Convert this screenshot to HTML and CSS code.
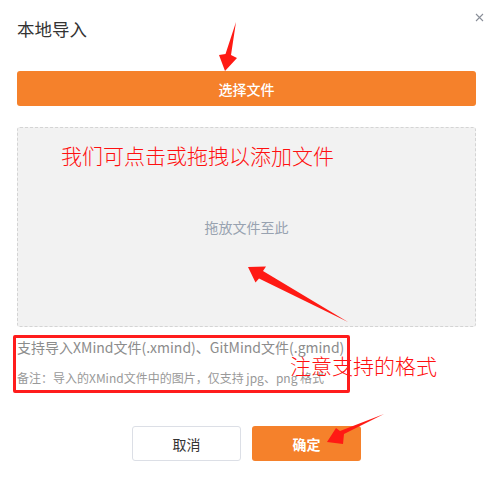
FILE: index.html
```html
<!DOCTYPE html>
<html lang="zh-CN">
<head>
<meta charset="utf-8">
<title>本地导入</title>
<link rel="stylesheet" href="styles.css">
</head>
<body>
<div class="dialog">
  <header class="head">
    <h1 class="title">本地导入</h1>
    <button class="close" aria-label="关闭">
      <svg width="9" height="9" viewBox="0 0 9 9"><path d="M1 1L8 8M8 1L1 8" stroke="#8a8f99" stroke-width="1.1" fill="none"/></svg>
    </button>
  </header>
  <button class="pick">选择文件</button>
  <div class="drop">拖放文件至此</div>
  <p class="support">支持导入XMind文件(.xmind)、GitMind文件(.gmind)</p>
  <p class="note">备注：导入的XMind文件中的图片，仅支持 jpg、png 格式</p>
  <footer class="actions">
    <button class="btn btn-cancel">取消</button>
    <button class="btn btn-ok">确定</button>
  </footer>
</div>

<!-- hand-drawn annotation layer -->
<div class="marks">
  <svg class="arrows" width="493" height="481" viewBox="0 0 493 481">
    <polygon points="236,22 231,55 237,58 225,71 219,55 225.5,54" />
    <polygon points="248,267 266,266.5 263,271 348,322 259,278.5 255.5,282.5" />
    <polygon points="384,414 344,434 343,444 327,442 336,428 340,431" />
  </svg>
  <span class="mark-text mark-drag">我们可点击或拖拽以添加文件</span>
  <span class="mark-text mark-format">注意支持的格式</span>
  <div class="mark-box"></div>
</div>
</body>
</html>
```

FILE: styles.css
```css
* { box-sizing: border-box; }

html, body {
  margin: 0;
  background: #fff;
  font-family: "Noto Sans CJK SC", "Noto Sans", sans-serif;
}

.dialog {
  width: 493px;
  height: 481px;
  padding: 16px 17px 0;
  position: relative;
}

.head {
  display: flex;
  justify-content: space-between;
  align-items: flex-start;
  height: 26px;
}

.title {
  margin: 0;
  font-size: 17.5px;
  line-height: 26px;
  font-weight: 400;
  color: #333;
}

.close {
  border: 0;
  background: none;
  padding: 0;
  margin: -3px -8px 0 0;
  width: 9px;
  height: 9px;
  display: flex;
}

.pick {
  display: block;
  width: 100%;
  height: 35px;
  margin-top: 29px;
  border: 0;
  border-radius: 3px;
  background: #f5812b;
  color: #fff;
  font-family: inherit;
  font-size: 14px;
  font-weight: 500;
}

.drop {
  margin-top: 21px;
  height: 200px;
  border: 1px dashed #d4d4d4;
  border-radius: 3px;
  background: #f2f2f2;
  display: flex;
  align-items: center;
  justify-content: center;
  color: #98a2b0;
  font-size: 14px;
}

.support {
  margin: 10px 0 0;
  font-size: 14px;
  line-height: 20px;
  color: #8c8c8c;
}

.note {
  margin: 12px 0 0;
  font-size: 12px;
  line-height: 18px;
  color: #999;
}

.actions {
  margin-top: 39px;
  display: flex;
  justify-content: center;
  gap: 11px;
}

.btn {
  width: 109px;
  height: 35px;
  border-radius: 3px;
  font-family: inherit;
  font-size: 14px;
}

.btn-cancel {
  background: #fff;
  border: 1px solid #dcdfe6;
  color: #333;
}

.btn-ok {
  background: #f5812b;
  border: 0;
  color: #fff;
  font-weight: 700;
}

/* annotation layer drawn over the dialog */
.marks {
  position: absolute;
  inset: 0;
  pointer-events: none;
}

.arrows {
  position: absolute;
  left: 0;
  top: 0;
}

.arrows polygon {
  fill: #ff1a14;
}

.mark-text {
  position: absolute;
  color: #ff1010;
  font-size: 21px;
  line-height: 24px;
  font-weight: 300;
  white-space: nowrap;
}

.mark-drag {
  left: 61px;
  top: 143px;
}

.mark-format {
  left: 290px;
  top: 353px;
}

.mark-box {
  position: absolute;
  left: 13px;
  top: 335px;
  width: 337px;
  height: 58px;
  border: 3px solid #ff1c1c;
  border-radius: 2px;
}
```
